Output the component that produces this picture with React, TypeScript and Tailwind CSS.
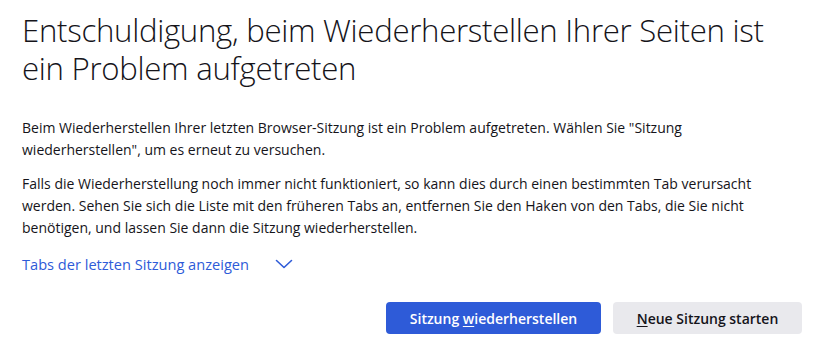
import React from "react";

export default function App() {
  return (
    <div
      className="w-[822px] h-[362px] bg-white text-[#15141a] overflow-hidden pl-[22px] pr-[20px] pt-[11px]"
      style={{ fontFamily: '"Open Sans", "Noto Sans", sans-serif' }}
    >
      <h1 className="text-[31.2px] leading-[38px] font-light tracking-[-0.3px]">
        Entschuldigung, beim Wiederherstellen Ihrer Seiten ist
        <br />
        ein Problem aufgetreten
      </h1>
      <p className="mt-[30px] text-[14px] leading-[22px]">
        Beim Wiederherstellen Ihrer letzten Browser-Sitzung ist ein Problem aufgetreten. Wählen Sie "Sitzung
        <br />
        wiederherstellen", um es erneut zu versuchen.
      </p>
      <p className="mt-[12px] text-[14px] leading-[22px]">
        Falls die Wiederherstellung noch immer nicht funktioniert, so kann dies durch einen bestimmten Tab verursacht
        <br />
        werden. Sehen Sie sich die Liste mit den früheren Tabs an, entfernen Sie den Haken von den Tabs, die Sie nicht
        <br />
        benötigen, und lassen Sie dann die Sitzung wiederherstellen.
      </p>
      <div className="mt-[14px] flex items-center text-[14.6px] leading-[22px] text-[#2e5bd8]">
        <span>Tabs der letzten Sitzung anzeigen</span>
        <svg className="ml-[26px]" width="18" height="12" viewBox="0 0 18 12" fill="none">
          <path d="M1.5 2.5 L9 9.5 L16.5 2.5" stroke="#2e5bd8" strokeWidth="1.6" strokeLinecap="round" strokeLinejoin="round" />
        </svg>
      </div>
      <div className="mt-[27px] flex justify-end gap-[12px]">
        <button className="w-[215px] h-[32px] rounded-[4px] bg-[#2e5bd8] text-white text-[14px] font-semibold">
          Sitzung <span className="underline underline-offset-2">w</span>iederherstellen
        </button>
        <button className="w-[189px] h-[32px] rounded-[4px] bg-[#e9e9ed] text-[#15141a] text-[14px] font-semibold">
          <span className="underline underline-offset-2">N</span>eue Sitzung starten
        </button>
      </div>
    </div>
  );
}
